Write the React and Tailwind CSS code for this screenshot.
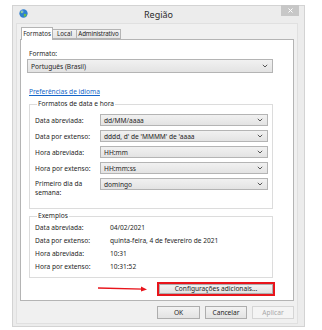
import React from "react";

const font = { fontFamily: '"Noto Sans", "Open Sans", sans-serif' };

function Chevron() {
  return (
    <svg width="6" height="4" viewBox="0 0 6 4" className="shrink-0">
      <path d="M0.8 0.8 L3 3 L5.2 0.8" fill="none" stroke="#555" strokeWidth="1" />
    </svg>
  );
}

function Combo({ value, className }) {
  return (
    <div
      className={`flex items-center justify-between border border-[#b4b4b4] bg-linear-to-b from-[#f1f1f1] to-[#e3e3e3] pl-[3px] pr-[4px] text-[#1e1e1e] ${className}`}
    >
      <span className="leading-[9px]">{value}</span>
      <Chevron />
    </div>
  );
}

function Globe() {
  return (
    <svg width="9" height="9" viewBox="0 0 10 10">
      <circle cx="5" cy="5" r="4.6" fill="#2f7fd0" />
      <path d="M2 2.5 Q3.5 1.5 4.5 3 Q4 4.5 2.5 5 Q1.2 4 2 2.5Z" fill="#5cb85c" />
      <path d="M5.5 5.5 Q7.5 5 8.5 6.5 Q7.5 8.5 6 8.8 Q5 7.5 5.5 5.5Z" fill="#6cc04a" />
      <circle cx="3.5" cy="3" r="1.6" fill="#ffffff" opacity="0.35" />
    </svg>
  );
}

function Button({ children, disabled, className }) {
  return (
    <div
      className={`flex items-center justify-center border ${
        disabled
          ? "border-[#d5d5d5] bg-[#f4f4f4] text-[#a8a8a8]"
          : "border-[#adadad] bg-linear-to-b from-[#f2f2f2] to-[#e3e3e3] text-[#1e1e1e]"
      } ${className}`}
    >
      {children}
    </div>
  );
}

const formatRows = [
  ["Data abreviada:", "dd/MM/aaaa"],
  ["Data por extenso:", "dddd, d' de 'MMMM' de 'aaaa"],
  ["Hora abreviada:", "HH:mm"],
  ["Hora por extenso:", "HH:mm:ss"],
];

const examples = [
  ["Data abreviada:", "04/02/2021"],
  ["Data por extenso:", "quinta-feira, 4 de fevereiro de 2021"],
  ["Hora abreviada:", "10:31"],
  ["Hora por extenso:", "10:31:52"],
];

export default function App() {
  return (
    <div className="w-[322px] h-[330px] bg-white pt-[5px] pl-[12px] text-[6.6px]" style={font}>
      <div className="w-[293px] h-[322px] bg-[#ececec] border border-[#d3d3d3] flex flex-col">
        {/* title bar */}
        <div className="h-[17px] flex items-start">
          <div className="pl-[6px] pt-[3px]">
            <Globe />
          </div>
          <div className="flex-1 text-center text-[9px] leading-[17px] text-[#2b2b2b] pl-[8px]">Região</div>
          <div className="w-[18px] h-[11px] mr-[5px] -mt-[1px] bg-[#c7c7c7] flex items-center justify-center">
            <svg width="5" height="5" viewBox="0 0 5 5">
              <path d="M0.5 0.5 L4.5 4.5 M4.5 0.5 L0.5 4.5" stroke="#fff" strokeWidth="1" />
            </svg>
          </div>
        </div>

        {/* client area */}
        <div className="flex-1 ml-[3px] mr-[6px] mb-[2px] bg-[#f0f0f0] border border-[#e0e0e0] pt-[3px] pl-[3px] pr-[3px] flex flex-col">
          {/* tabs */}
          <div className="flex items-end h-[12px] pl-[1px] text-[6.2px] whitespace-nowrap">
            <div className="h-[13px] -mb-[1px] w-[32px] bg-white border border-b-0 border-[#b4b4b4] flex items-center justify-center text-[#1e1e1e] relative z-10">
              Formatos
            </div>
            <div className="h-[10px] w-[24px] bg-linear-to-b from-[#f2f2f2] to-[#e5e5e5] border border-l-0 border-[#b4b4b4] flex items-center justify-center text-[#1e1e1e]">
              Local
            </div>
            <div className="h-[10px] w-[44px] bg-linear-to-b from-[#f2f2f2] to-[#e5e5e5] border border-l-0 border-[#b4b4b4] flex items-center justify-center text-[#1e1e1e] tracking-[-0.15px]">
              Administrativo
            </div>
          </div>

          {/* pane */}
          <div className="h-[262px] w-[274px] bg-white border border-[#b4b4b4] pt-[9px] pl-[6px] pr-[20px] flex flex-col text-[#1e1e1e]">
            <div className="leading-[9px] pl-[2px]">Formato:</div>
            <Combo value="Português (Brasil)" className="mt-[1px] h-[14px] w-[246px]" />
            <div className="mt-[14px] leading-[9px] pl-[2px] text-[#1565c8] underline">Preferências de idioma</div>

            <fieldset className="mt-[3px] ml-[2px] w-[244px] border border-[#dcdcdc] pl-[5px] pr-[4px] pt-[5px] pb-[11px]">
              <legend className="leading-[10px] ml-[2px] px-[1px]">Formatos de data e hora</legend>
              <div className="flex flex-col gap-[4px]">
                {formatRows.map(([label, value]) => (
                  <div key={label} className="flex items-center">
                    <div className="w-[65px] leading-[9px]">{label}</div>
                    <Combo value={value} className="h-[12px] w-[168px]" />
                  </div>
                ))}
                <div className="flex items-start">
                  <div className="w-[65px] leading-[9px] pt-[1px]">
                    Primeiro dia da
                    <br />
                    semana:
                  </div>
                  <Combo value="domingo" className="h-[12px] w-[168px]" />
                </div>
              </div>
            </fieldset>

            <fieldset className="mt-[2px] ml-[2px] w-[244px] border border-[#dcdcdc] pl-[5px] pr-[4px] pb-[4px]">
              <legend className="leading-[10px] ml-[2px] px-[1px]">Exemplos</legend>
              <div className="flex flex-col">
                {examples.map(([label, value]) => (
                  <div key={label} className="flex items-center h-[13px]">
                    <div className="w-[75px] leading-[9px]">{label}</div>
                    <div className="leading-[9px]">{value}</div>
                  </div>
                ))}
              </div>
            </fieldset>

            <div className="mt-[4px] flex items-center justify-end -mr-[2px]">
              <svg width="50" height="6" viewBox="0 0 50 6" className="mr-[9px]">
                <path d="M0 2 L45 3.2" stroke="#e8141b" strokeWidth="1.3" />
                <path d="M43 0.6 L49 3.4 L43 5.6 Z" fill="#e8141b" />
              </svg>
              <div className="border-2 border-[#e8141b] w-[118px] h-[14px]">
                <Button className="h-full w-full">Configurações adicionais...</Button>
              </div>
            </div>
          </div>

          {/* dialog buttons */}
          <div className="mt-[5px] flex justify-end gap-[5px]">
            <Button className="w-[43px] h-[13px]">OK</Button>
            <Button className="w-[42px] h-[13px]">Cancelar</Button>
            <Button disabled className="w-[42px] h-[13px]">Aplicar</Button>
          </div>
        </div>
      </div>
    </div>
  );
}
